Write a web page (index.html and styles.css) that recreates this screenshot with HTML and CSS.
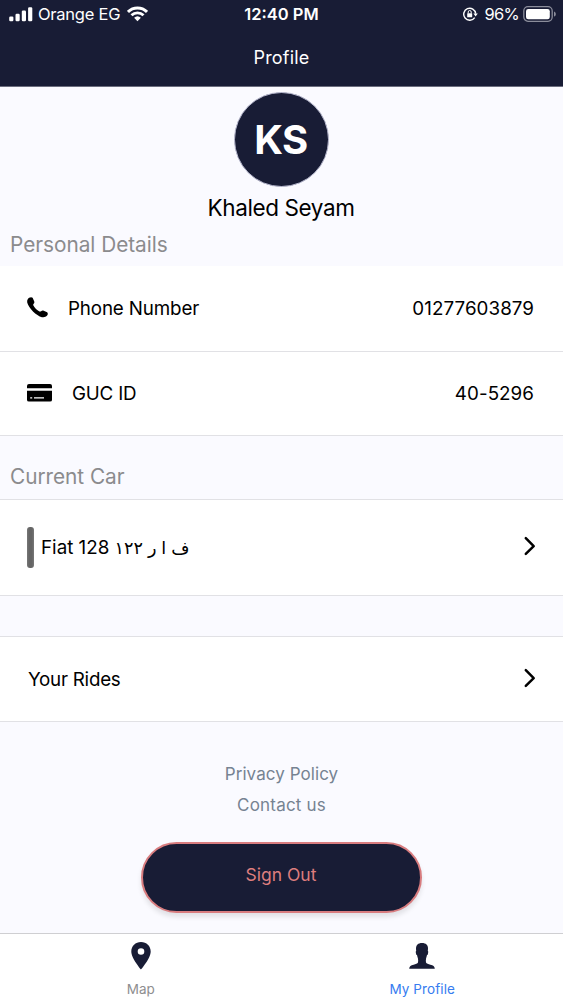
FILE: index.html
```html
<!DOCTYPE html>
<html lang="en">
<head>
<meta charset="utf-8">
<title>Profile</title>
<link rel="stylesheet" href="styles.css">
</head>
<body>
<div class="screen">
  <header class="header">
    <div class="status">
      <div class="status-left">
        <svg class="signal" width="25" height="15" viewBox="0 0 25 15" fill="#fff"><rect x="0.2" y="9.5" width="4.2" height="4.800" rx="1.2"/><rect x="6.5" y="6.8" width="4.2" height="7.5" rx="1.2"/><rect x="12.8" y="3.6" width="4.2" height="10.7" rx="1.2"/><rect x="19.1" y="0.3" width="4.2" height="14" rx="1.2"/></svg>
        <span class="carrier">Orange EG</span>
        <svg class="wifi" width="21" height="16" viewBox="0 0 21 16"><g fill="none" stroke="#fff" stroke-width="2.9"><path d="M1 5.9a13.6 13.6 0 0 1 19 0"/><path d="M4.5 9.3a8.7 8.7 0 0 1 12 0"/></g><path d="M10.5 15.2 7.1 11.8a5 5 0 0 1 6.8 0z" fill="#fff"/></svg>
      </div>
      <span class="clock">12:40 PM</span>
      <div class="status-right">
        <svg class="lock" width="15" height="14" viewBox="0 0 15 14"><path d="M11.7 10.6A6 6 0 1 1 12.7 6.6" fill="none" stroke="#fff" stroke-width="1.4"/><path d="M10.4 6.4h4.4l-2.2 3z" fill="#fff"/><rect x="4.200" y="6.2" width="5" height="4" rx=".5" fill="#fff"/><path d="M5.2 6.4V5a1.5 1.5 0 0 1 3 0v1.4" fill="none" stroke="#fff"/></svg>
        <span class="percent">96%</span>
        <svg class="battery" width="34" height="16" viewBox="0 0 34 16"><rect x=".8" y=".7" width="28.4" height="14.600" rx="4.200" fill="none" stroke="#8b8d9b" stroke-width="1.3"/><rect x="3" y="2.900" width="23.800" height="10.300" rx="2.300" fill="#fff"/><path d="M31 5.400c2.400.8 2.400 4.400 0 5.200z" fill="#8b8d9b"/></svg>
      </div>
    </div>
    <h1 class="title">Profile</h1>
  </header>

  <main class="content">
    <div class="avatar"><span>KS</span></div>
    <div class="name"><span>Khaled Seyam</span></div>

    <h2 class="section personal"><span>Personal Details</span></h2>
    <div class="row phone">
      <svg class="phone-icon" width="21" height="21" viewBox="0 0 22 22"><path d="M2.2.9C3.300 0 5.100-.1 5.900.8l1.600 3.600c.4 1 .3 1.900-.5 2.700-.6.600-.6 1.200-.3 1.800.7 1.400 1.600 2.600 2.700 3.700 1.100 1 2.200 1.800 3.600 2.500.6.300 1.200.3 1.800-.3.8-.7 1.700-.9 2.700-.5l3.600 1.700c.9.700.9 2.500 0 3.500-1.400 1.600-3.400 2.100-5.500 1.600C9.800 19.500 1.700 11.500.3 5.900-.1 3.800.5 2.200 2.200.9z"/></svg>
      <span class="label phone-label">Phone Number</span>
      <span class="value phone-value">01277603879</span>
    </div>
    <div class="row guc">
      <svg class="card-icon" width="25" height="18" viewBox="0 0 25 18"><path d="M2 0h21q2 0 2 2v2.200H0V2q0-2 2-2zM0 6.800h25V16q0 1.500-2 1.500H2Q0 17.500 0 16z"/><path d="M3.200 13.800h2M7 13.800h10" stroke="#fff" stroke-width="1.300"/></svg>
      <span class="label guc-label">GUC ID</span>
      <span class="value guc-value">40-5296</span>
    </div>

    <h2 class="section current"><span>Current Car</span></h2>
    <div class="row car">
      <i class="swatch"></i>
      <span class="label car-label">Fiat 128 <span class="plate">ف ا ر ١٢٢</span></span>
      <svg class="chevron" width="12" height="20" viewBox="0 0 12 20"><path d="m1.800 2.200 7.900 7.900-7.900 7.800"/></svg>
    </div>
    <div class="row rides">
      <span class="label rides-label">Your Rides</span>
      <svg class="chevron" width="12" height="20" viewBox="0 0 12 20"><path d="m1.800 2.200 7.900 7.900-7.900 7.800"/></svg>
    </div>

    <div class="links"><a class="privacy">Privacy Policy</a><a class="contact">Contact us</a></div>
    <button class="signout"><span>Sign Out</span></button>
  </main>

  <nav class="tabs">
    <div class="tab">
      <svg width="20" height="28" viewBox="0 0 20 28"><path fill="#181c35" fill-rule="evenodd" d="M10 0C4.500 0 .3 4.100.3 9.500.3 16.300 10 27.500 10 27.500s9.700-11.200 9.700-18C19.700 4.100 15.500 0 10 0zm0 6.200a3.300 3.300 0 1 1 0 6.600 3.300 3.300 0 0 1 0-6.600z"/></svg>
      <span class="tab-map">Map</span>
    </div>
    <div class="tab">
      <svg width="26" height="28" viewBox="0 0 26 28"><path fill="#181c35" d="M13 1C9 1 7 3.100 7 6.500c0 1 .1 1.800.2 2.600-.6.200-.5 1.200-.2 2.300.2.900.5 1.600 1 1.700.2 1.400.6 2.300.9 3.200.3 1.400.4 2.900.1 4.300-.5 1.200-2.300 1.600-4.400 2.100C1.800 23.400.3 24.200.2 26.700h25.600c-.1-2.500-1.600-3.300-4.400-4-2.100-.5-3.900-.9-4.400-2.100-.3-1.400-.2-2.900.1-4.300.3-.9.700-1.800.9-3.200.5-.1.800-.8 1-1.700.3-1.100.4-2.100-.2-2.300.1-.8.200-1.600.2-2.600C19 3.100 17 1 13 1z"/></svg>
      <span class="tab-profile">My Profile</span>
    </div>
  </nav>
</div>
</body>
</html>
```
FILE: styles.css
```css
* { box-sizing: border-box; }
body { margin: 0; font-family: Inter, "Noto Sans", "DejaVu Sans", sans-serif; color: #000; background: #fafaff; }
svg { display: block; flex: none; }
.screen { width: 563px; height: 1000px; display: flex; flex-direction: column; overflow: hidden; }
.header { height: 87px; flex: none; background: #181c35; color: #fff; border-bottom: 1px solid #6b6d7e; }
.status { height: 28px; display: grid; grid-template-columns: 1fr auto 1fr; align-items: center; font-size: 16.5px; line-height: 20px; white-space: nowrap; }
.status-left, .status-right { display: flex; align-items: center; }
.status-left { padding-left: 9px; }
.status-right { justify-content: flex-end; padding-right: 7px; }
.carrier { margin-left: 4px; letter-spacing: -.25px; }
.wifi { margin-left: 7px; }
.clock { font-weight: 600; }
.percent { margin: 0 4px 0 6px; letter-spacing: -.7px; }
.battery { margin-right: -1px; }
.title { margin: 18px 0 0; font-size: 18px; font-weight: 400; line-height: 24px; text-align: center; letter-spacing: .2px; }
.content { flex: 1; display: flex; flex-direction: column; padding-top: 5px; }
.avatar { width: 95px; height: 95px; align-self: center; flex: none; border: 1px solid #b9bad0; border-radius: 50%; background: #181c35; color: #fff; display: flex; align-items: center; justify-content: center; font-size: 40px; font-weight: 700; letter-spacing: -.5px; padding-right: 1px; }
.name { height: 41px; flex: none; text-align: center; font-size: 22.500px; line-height: 41px; letter-spacing: -.4px; padding-right: 1px; }
.section { margin: 0; flex: none; padding-left: 10px; font-size: 20.800px; font-weight: 400; color: #8b8b8d; white-space: nowrap; letter-spacing: -.03px; }
.personal { height: 37px; line-height: 31px; margin-top: 1px; }
.row { height: 85px; flex: none; display: flex; align-items: center; background: #fff; border-bottom: 1px solid #e1e1e5; padding: 0 29px 0 27px; font-size: 18.800px; white-space: nowrap; }
.phone { height: 86px; }
.phone-icon { margin-bottom: 2px; }
.phone-label { margin-left: 20px; letter-spacing: -.15px; }
.guc { height: 84px; }
.card-icon { margin-bottom: 2px; }
.guc-label { margin-left: 20px; letter-spacing: -.2px; }
.value { margin-left: auto; letter-spacing: .05px; }
.current { height: 63px; line-height: 81px; }
.car { height: 97px; border-top: 1px solid #e1e1e5; }
.swatch { width: 7px; height: 41px; border-radius: 3px; background: linear-gradient(90deg, #777, #656565 30%, #656565 70%, #777); }
.car-label { margin-left: 7px; }
.plate { font-size: 17.600px; }
.chevron { margin-left: auto; fill: none; stroke: #000; stroke-width: 2.500; stroke-linecap: round; stroke-linejoin: round; }
.car .chevron, .rides .chevron { margin-right: -2px; }
.car .chevron { margin-bottom: 4px; }
.rides .chevron { margin-bottom: 3px; }
.rides { height: 86px; margin-top: 40px; border-top: 1px solid #e1e1e5; }
.rides-label { margin-left: 1px; letter-spacing: -.25px; }
.links { margin-top: 37px; display: flex; flex-direction: column; align-items: center; font-size: 17px; line-height: 31px; color: #768392; letter-spacing: .07px; }
.contact { letter-spacing: .2px; }
.signout { align-self: center; flex: none; width: 281px; height: 71px; margin-top: 21px; padding: 0 1px 7px 0; border: 2px solid #d87c7f; border-radius: 36px; background: #181c35; color: #de7e7e; font: 17.500px Inter, sans-serif; box-shadow: 0 4px 5px rgba(0, 0, 0, .1); }
.tabs { height: 67px; flex: none; display: grid; grid-template-columns: 1fr 1fr; background: #fff; border-top: 1px solid #cfcfd2; }
.tab { display: flex; flex-direction: column; align-items: center; padding-top: 8px; font-size: 13.500px; line-height: 18px; gap: 10px; }
.tab-map { color: #8e8e8f; }
.tab-profile { color: #367cf0; letter-spacing: .1px; }
```
